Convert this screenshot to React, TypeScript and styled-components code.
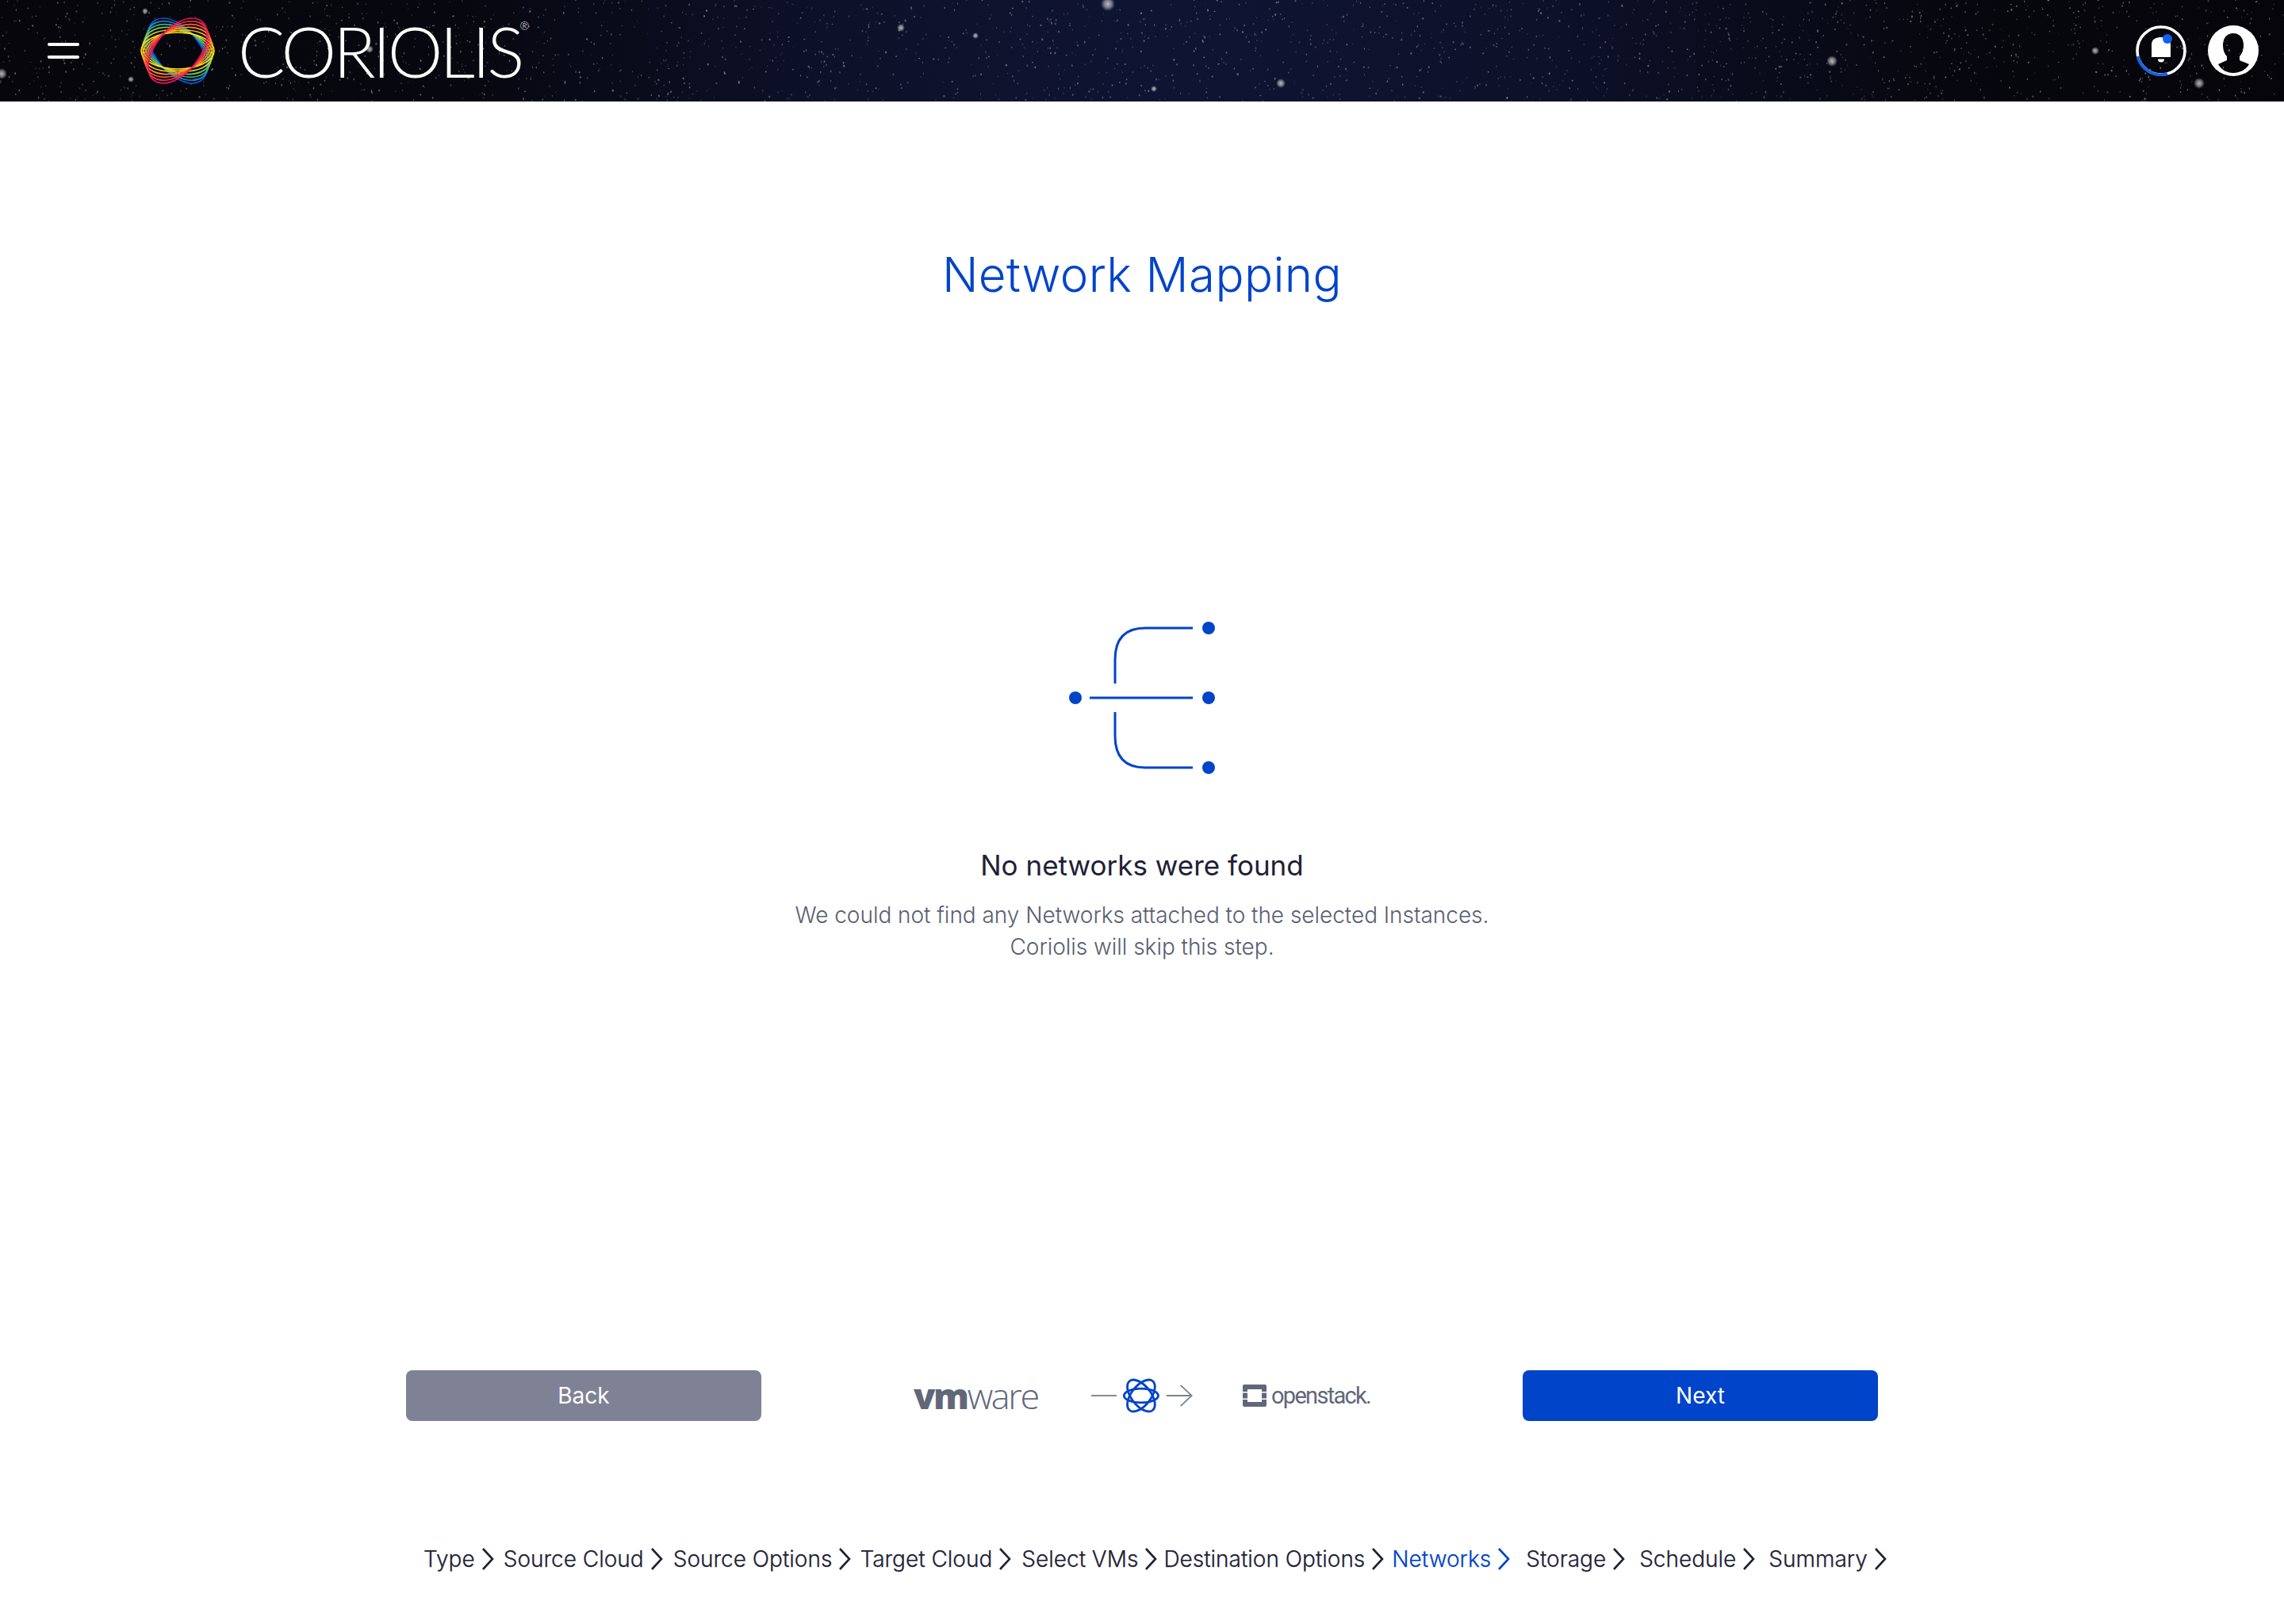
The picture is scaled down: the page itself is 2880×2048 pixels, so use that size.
import React from "react";
import styled, { createGlobalStyle } from "styled-components";

const Global = createGlobalStyle`
  html, body { margin: 0; padding: 0; background: #fff; }
  body { font-family: Inter, "Open Sans", sans-serif; font-weight: 300; color: #202134; }
  * { box-sizing: border-box; }
`;

const Page = styled.div`
  width: 2880px;
  height: 2048px;
  display: flex;
  flex-direction: column;
  overflow: hidden;
`;

const Header = styled.header`
  position: relative;
  height: 128px;
  flex: none;
  display: flex;
  align-items: center;
  padding: 0 32px 0 60px;
  overflow: hidden;
  background: linear-gradient(90deg, #06060c 0%, #07070f 20%, #0d1129 36%, #0f1433 52%, #0d1129 68%, #07070f 85%, #050509 100%);
`;
const Stars = styled.svg`
  position: absolute;
  inset: 0;
`;
const MenuButton = styled.div`
  position: relative;
  width: 40px;
  display: flex;
  flex-direction: column;
  gap: 12px;
`;
const MenuBar = styled.span`
  display: block;
  height: 4px;
  border-radius: 2px;
  background: #fff;
`;
const LogoLink = styled.div`
  position: relative;
  display: flex;
  align-items: center;
  margin-left: 76px;
`;
const Wordmark = styled.div`
  position: relative;
  margin-left: 28px;
  font-family: Lato, sans-serif;
  font-weight: 300;
  font-size: 88px;
  line-height: 88px;
  letter-spacing: -3.9px;
  color: #fff;
`;
const Registered = styled.sup`
  position: absolute;
  top: 6px;
  left: 100%;
  margin-left: -2px;
  font-size: 14px;
  line-height: 14px;
  letter-spacing: 0;
`;
const HeaderRight = styled.div`
  position: relative;
  margin-left: auto;
  display: flex;
  align-items: center;
  gap: 26px;
`;

const Main = styled.main`
  flex: 1;
  display: flex;
  flex-direction: column;
  align-items: center;
`;
const Title = styled.h1`
  margin: 176px 0 0;
  font-size: 60px;
  line-height: 84px;
  font-weight: 300;
  letter-spacing: 0.4px;
  color: #0044ca;
`;
const Empty = styled.section`
  margin-top: 396px;
  display: flex;
  flex-direction: column;
  align-items: center;
  height: 944px;
`;
const EmptyTitle = styled.h2`
  margin: 91px 0 0;
  font-size: 35px;
  line-height: 48px;
  font-weight: 400;
  color: #202134;
`;
const EmptyText = styled.p`
  margin: 19px 0 0;
  font-size: 28px;
  line-height: 40px;
  font-weight: 300;
  letter-spacing: -0.03px;
  text-align: center;
  color: #585e70;
`;
const Nav = styled.div`
  width: 1856px;
  display: flex;
  align-items: center;
  justify-content: space-between;
`;
const Button = styled.button<{ $primary?: boolean }>`
  width: 448px;
  height: 64px;
  border: 0;
  border-radius: 8px;
  padding: 0;
  font-family: inherit;
  font-size: 28px;
  font-weight: 400;
  color: #fff;
  background: ${(p) => (p.$primary ? "#0044ca" : "#7f8295")};
`;
const Endpoints = styled.div`
  display: flex;
  align-items: center;
  width: 576px;
`;
const VmwareLogo = styled.div`
  width: 239px;
  font-family: "Open Sans", sans-serif;
  font-size: 45px;
  line-height: 44px;
  font-weight: 300;
  letter-spacing: -2.4px;
  color: #616779;
`;
const Vm = styled.span`
  font-weight: 800;
`;
const OpenstackLogo = styled.div`
  display: flex;
  align-items: center;
  margin-left: 63px;
  gap: 6px;
  font-family: Roboto, sans-serif;
  font-size: 29px;
  font-weight: 400;
  letter-spacing: -1.7px;
  color: #616779;
`;
const Crumbs = styled.nav`
  margin-top: 154px;
  width: 1856px;
  padding-left: 22px;
  display: flex;
  align-items: center;
  height: 40px;
`;
const Crumb = styled.div<{ $active?: boolean; $gap: number }>`
  display: flex;
  align-items: center;
  margin-right: ${(p) => p.$gap}px;
  font-size: 28px;
  line-height: 40px;
  font-weight: 300;
  white-space: nowrap;
  -webkit-text-stroke: 0.25px currentColor;
  color: ${(p) => (p.$active ? "#0044ca" : "#202134")};
`;
const Chevron = styled.svg`
  margin-left: 8px;
  flex: none;
`;

function seeded(seed: number) {
  let s = seed;
  return () => {
    s = (s * 16807) % 2147483647;
    return (s - 1) / 2147483646;
  };
}

const glows: [number, number, number][] = [
  [1397, 5, 9],
  [1136, 35, 5],
  [1615, 105, 6],
  [1455, 112, 4],
  [1230, 45, 4],
  [2310, 77, 7],
  [2773, 105, 7],
  [2, 93, 7],
  [2642, 64, 5],
  [183, 14, 4],
  [165, 100, 4],
  [466, 62, 5],
];

function StarField() {
  const r = seeded(4242);
  const stars = Array.from({ length: 2300 }, (_, i) => (
    <ellipse
      key={i}
      cx={r() * 2880}
      cy={r() * 128}
      rx={0.5 + r() * 0.6}
      ry={0.7 + r() * 0.8}
      fill="#fff"
      opacity={0.1 + r() * 0.3}
    />
  ));
  return (
    <Stars width="2880" height="128" viewBox="0 0 2880 128" aria-hidden>
      <defs>
        <radialGradient id="glow">
          <stop offset="0" stopColor="#fff" stopOpacity="0.7" />
          <stop offset="0.5" stopColor="#fff" stopOpacity="0.45" />
          <stop offset="1" stopColor="#fff" stopOpacity="0" />
        </radialGradient>
      </defs>
      {stars}
      {glows.map(([x, y, g]) => (
        <circle key={x} cx={x} cy={y} r={g} fill="url(#glow)" />
      ))}
    </Stars>
  );
}

function RingLogo() {
  const rings: [string, number][] = [
    ["#0a57d0", 1],
    ["#1f8fc4", 0.8],
    ["#2fb09a", 0.6],
    ["#7cc44e", 0.4],
    ["#c9d62c", 0.2],
    ["#ffdc14", 0],
    ["#ffb81a", -0.2],
    ["#ff8a22", -0.4],
    ["#ff5a30", -0.6],
    ["#fb3050", -0.8],
    ["#f2145f", -1],
  ];
  return (
    <svg width="96" height="88" viewBox="-48 -44 96 88">
      <g fill="none" strokeWidth="1.7">
        {rings.map(([c, t]) => {
          const m = Math.abs(t);
          return (
            <ellipse
              key={c}
              rx={46 - 9 * m}
              ry={23 + 12.5 * m}
              stroke={c}
              vectorEffect="non-scaling-stroke"
              transform={`matrix(1 ${0.55 * t} 0 1 0 0)`}
            />
          );
        })}
      </g>
    </svg>
  );
}

function BellIcon() {
  return (
    <svg width="66" height="66" viewBox="0 0 66 66">
      <circle cx="33" cy="33" r="30" fill="none" stroke="#fff" strokeWidth="3.6" />
      <path d="M3.6 40 A30 30 0 0 0 41 62" fill="none" stroke="#0f62f0" strokeWidth="3.6" />
      <path d="M21 41 V25 C21 18 27 16 33 16 C39 16 45 18 45 25 V41 Z" fill="#fff" />
      <path d="M29 43.5 H37 A4 4 0 0 1 29 43.5 Z" fill="#fff" />
      <circle cx="41" cy="18" r="6" fill="#0f62f0" />
    </svg>
  );
}

function UserIcon() {
  return (
    <svg width="64" height="64" viewBox="0 0 64 64">
      <path
        fillRule="evenodd"
        fill="#fff"
        d="M32 0 A32 32 0 1 1 32 64 A32 32 0 1 1 32 0 Z M32 10 C23 10 19 17 19 25 C19 31 21 36 24 39 L24 44 L13 49 C17 56 24 60 32 60 C40 60 48 56 52 49 L40 44 L40 39 C43 36 45 31 45 25 C45 17 41 10 32 10 Z"
      />
    </svg>
  );
}

function NetworkIcon() {
  return (
    <svg width="184" height="192" viewBox="0 0 184 192">
      <g fill="#0044ca">
        <circle cx="8" cy="96" r="8" />
        <circle cx="176" cy="8" r="8" />
        <circle cx="176" cy="96" r="8" />
        <circle cx="176" cy="184" r="8" />
      </g>
      <g fill="none" stroke="#0044ca" strokeWidth="3">
        <path d="M26 96 H156" />
        <path d="M58 78 V48 C58 22 70 8 96 8 H156" />
        <path d="M58 114 V144 C58 170 70 184 96 184 H156" />
      </g>
    </svg>
  );
}

function FlowIcon() {
  return (
    <svg width="136" height="46" viewBox="0 0 136 46">
      <path d="M0 23 H34" stroke="#7f8295" strokeWidth="2" fill="none" />
      <g fill="none" stroke="#0044ca" strokeWidth="3" transform="translate(67 23)">
        <ellipse rx="23" ry="9.5" />
        <ellipse rx="25" ry="13" transform="rotate(52)" />
        <ellipse rx="25" ry="13" transform="rotate(-52)" />
      </g>
      <path d="M101 23 H134 M120 9 L135 23 L120 37" stroke="#7f8295" strokeWidth="2" fill="none" />
    </svg>
  );
}

function OpenstackMark() {
  return (
    <svg width="30" height="28" viewBox="0 0 30 28">
      <path
        fillRule="evenodd"
        fill="#616779"
        d="M2 0 H28 A2 2 0 0 1 30 2 V26 A2 2 0 0 1 28 28 H2 A2 2 0 0 1 0 26 V2 A2 2 0 0 1 2 0 Z M6 6 V22 H24 V6 Z M0 9 V10.5 H6 V9 Z M0 17.5 V19 H6 V17.5 Z M24 9 V10.5 H30 V9 Z M24 17.5 V19 H30 V17.5 Z"
      />
    </svg>
  );
}

const steps: { label: string; gap: number; active?: boolean }[] = [
  { label: "Type", gap: 12 },
  { label: "Source Cloud", gap: 13 },
  { label: "Source Options", gap: 11 },
  { label: "Target Cloud", gap: 13 },
  { label: "Select VMs", gap: 8 },
  { label: "Destination Options", gap: 10 },
  { label: "Networks", gap: 20, active: true },
  { label: "Storage", gap: 18 },
  { label: "Schedule", gap: 17 },
  { label: "Summary", gap: 0 },
];

export default function App() {
  return (
    <Page>
      <Global />
      <Header>
        <StarField />
        <MenuButton>
          <MenuBar />
          <MenuBar />
        </MenuButton>
        <LogoLink>
          <RingLogo />
          <Wordmark>
            CORIOLIS
            <Registered>®</Registered>
          </Wordmark>
        </LogoLink>
        <HeaderRight>
          <BellIcon />
          <UserIcon />
        </HeaderRight>
      </Header>
      <Main>
        <Title>Network Mapping</Title>
        <Empty>
          <NetworkIcon />
          <EmptyTitle>No networks were found</EmptyTitle>
          <EmptyText>
            We could not find any Networks attached to the selected Instances.
            <br />
            Coriolis will skip this step.
          </EmptyText>
        </Empty>
        <Nav>
          <Button>Back</Button>
          <Endpoints>
            <VmwareLogo>
              <Vm>vm</Vm>ware
            </VmwareLogo>
            <FlowIcon />
            <OpenstackLogo>
              <OpenstackMark />
              openstack.
            </OpenstackLogo>
          </Endpoints>
          <Button $primary>Next</Button>
        </Nav>
        <Crumbs>
          {steps.map((s) => (
            <Crumb key={s.label} $active={s.active} $gap={s.gap}>
              {s.label}
              <Chevron width="16" height="30" viewBox="0 0 16 30">
                <path d="M2 2 L14 15 L2 28" fill="none" stroke="currentColor" strokeWidth="2.6" />
              </Chevron>
            </Crumb>
          ))}
        </Crumbs>
      </Main>
    </Page>
  );
}
